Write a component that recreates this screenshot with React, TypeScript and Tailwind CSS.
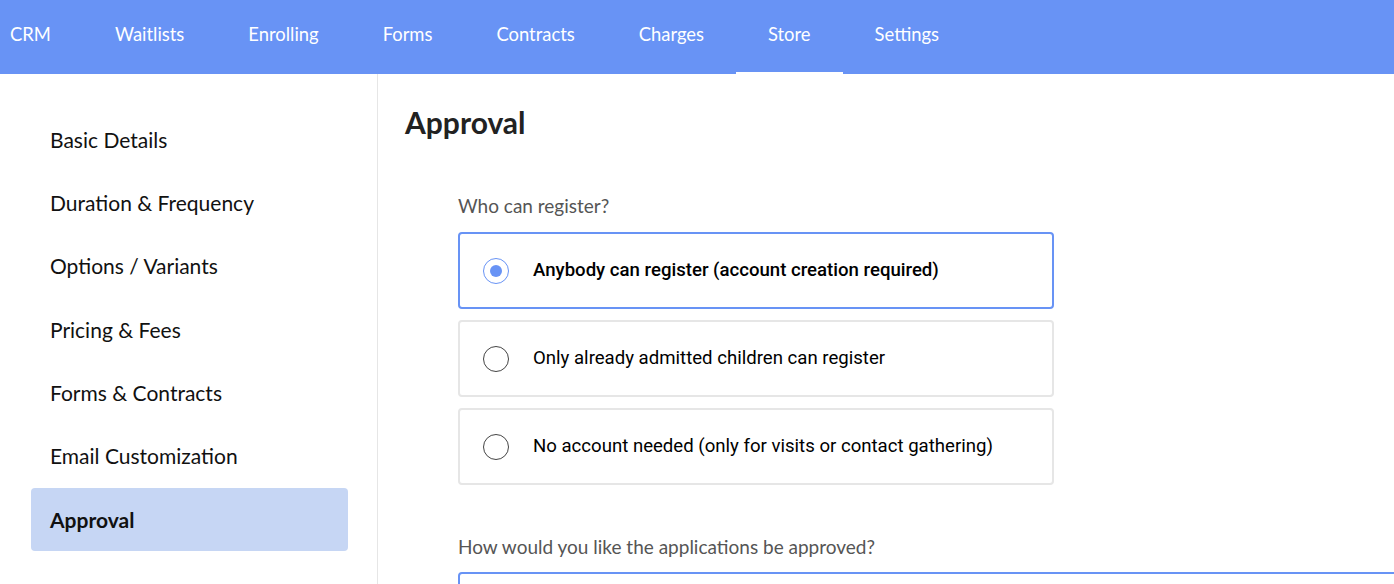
import React, { useState } from 'react';

const navItems = ['CRM', 'Waitlists', 'Enrolling', 'Forms', 'Contracts', 'Charges', 'Store', 'Settings'];

const sideItems = [
  'Basic Details',
  'Duration & Frequency',
  'Options / Variants',
  'Pricing & Fees',
  'Forms & Contracts',
  'Email Customization',
  'Approval',
];

const registerOptions = [
  'Anybody can register (account creation required)',
  'Only already admitted children can register',
  'No account needed (only for visits or contact gathering)',
];

const Radio: React.FC<{ checked: boolean }> = ({ checked }) => (
  <span
    className={
      checked
        ? 'flex h-[26px] w-[26px] shrink-0 items-center justify-center rounded-full border border-[#6893f5] bg-white'
        : 'flex h-[26px] w-[26px] shrink-0 items-center justify-center rounded-full border border-[#444] bg-white'
    }
  >
    {checked && <span className="h-[12px] w-[12px] rounded-full bg-[#6893f5]" />}
  </span>
);

const App: React.FC = () => {
  const [selected, setSelected] = useState(0);

  return (
    <div className="flex h-[584px] w-[1394px] flex-col overflow-hidden bg-white font-['Lato',sans-serif]">
      {/* top nav */}
      <nav className="flex h-[74px] shrink-0 bg-[#6893f5] pl-[10px]">
        {navItems.map((item, i) => (
          <div
            key={item}
            className={
              'relative flex h-full items-start pt-[23px] text-[18.4px] leading-[22px] text-white ' +
              (i === 0 ? 'pr-8' : 'px-8')
            }
          >
            {item}
            {item === 'Store' && <span className="absolute bottom-0 left-0 right-0 h-[2px] bg-white" />}
          </div>
        ))}
      </nav>

      <div className="flex flex-1 overflow-hidden">
        {/* sidebar */}
        <aside className="w-[378px] shrink-0 border-r border-[#e6e6e6] pl-[31px] pr-[29px] pt-[34px]">
          {sideItems.map((item) => {
            const active = item === 'Approval';
            return (
              <div
                key={item}
                className={
                  'flex h-[63.3px] items-center rounded-[4px] px-[19px] text-[21px] text-[#111] ' +
                  (active ? 'bg-[#c6d6f4] font-bold' : '')
                }
              >
                {item}
              </div>
            );
          })}
        </aside>

        {/* main content */}
        <main className="flex-1 pl-[27px] pt-[30px]">
          <h1 className="text-[30px] font-bold leading-[36px] text-[#222]">Approval</h1>

          <div className="pl-[53px]">
            <p className="mt-[54px] text-[19px] leading-[24px] text-[#555]">Who can register?</p>

            <div className="mt-[14px] flex w-[596px] flex-col gap-[11px]">
              {registerOptions.map((opt, i) => (
                <button
                  key={opt}
                  onClick={() => setSelected(i)}
                  className={
                    'flex h-[77px] items-center gap-[24px] rounded-[4px] border-2 pl-[23px] text-left font-[Roboto,sans-serif] text-[18.6px] text-black ' +
                    (selected === i ? 'border-[#6893f5] font-medium' : 'border-[#e6e6e6]')
                  }
                >
                  <Radio checked={selected === i} />
                  {opt}
                </button>
              ))}
            </div>

            <p className="mt-[50px] text-[19px] leading-[24px] text-[#555]">
              How would you like the applications be approved?
            </p>
            <div className="mt-[13px] h-[77px] w-[1000px] rounded-[4px] border-2 border-[#6893f5]" />
          </div>
        </main>
      </div>
    </div>
  );
};

export default App;
